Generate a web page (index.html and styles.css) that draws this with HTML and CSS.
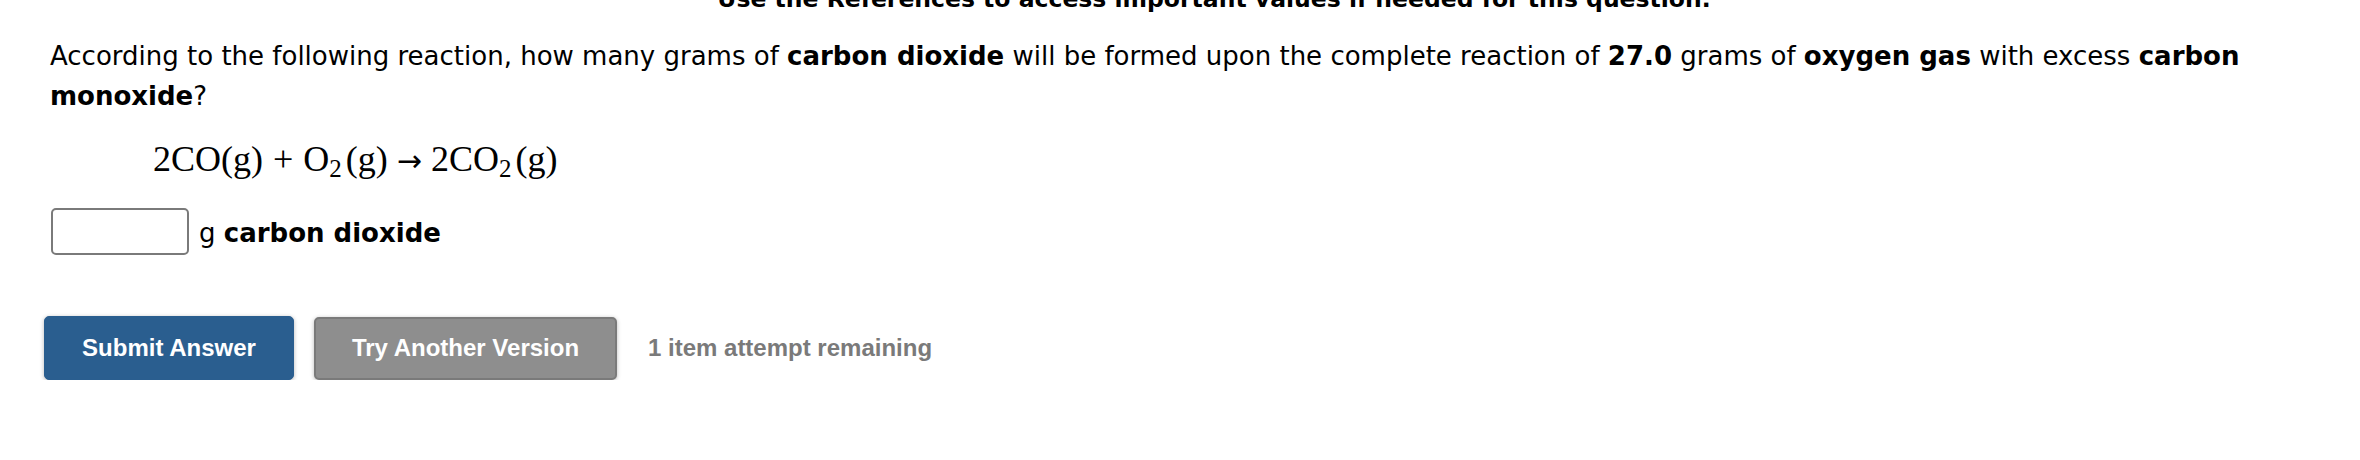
FILE: index.html
```html
<!DOCTYPE html>
<html lang="en">
<head>
<meta charset="utf-8">
<title>Question</title>
<link rel="stylesheet" href="styles.css">
</head>
<body>
<div class="page">
  <div class="refs">Use the References to access important values if needed for this question.</div>
  <p class="question">According to the following reaction, how many grams of <b>carbon dioxide</b> will be formed upon the complete reaction of <b>27.0</b> grams of <b>oxygen gas</b> with excess <b>carbon monoxide</b>?</p>
  <div class="equation"><span class="t">2CO(g)</span><span class="op">+</span><span class="t">O<sub>2</sub>(g)</span><span class="op arrow">→</span><span class="t">2CO<sub>2</sub>(g)</span></div>
  <div class="answer-row">
    <input class="answer" type="text" aria-label="answer">
    <span class="unit">g <b>carbon dioxide</b></span>
  </div>
  <div class="actions">
    <button class="btn btn-primary" type="button">Submit Answer</button>
    <button class="btn btn-secondary" type="button">Try Another Version</button>
    <span class="attempts">1 item attempt remaining</span>
  </div>
</div>
</body>
</html>
```

FILE: styles.css
```css
html, body {
  margin: 0;
  padding: 0;
  background: #ffffff;
}

.page {
  padding: 0 50px;
  font-family: "DejaVu Sans", Verdana, sans-serif;
  font-size: 26px;
  line-height: 40px;
  color: #000000;
}

.refs {
  margin-top: -21px;
  padding-left: 68px;
  text-align: center;
  font-weight: bold;
  font-size: 23.5px;
  white-space: nowrap;
}

.question {
  margin: 17px 0 0 0;
}

.question b {
  font-weight: bold;
}

.equation {
  margin-top: 18px;
  padding-left: 103px;
  font-family: "Liberation Serif", "DejaVu Serif", serif;
  font-size: 36px;
  line-height: 50px;
  display: flex;
  align-items: baseline;
}

.equation sub {
  font-size: 25px;
  line-height: 0;
  vertical-align: -6px;
  margin-right: 4px;
}

.equation .op {
  margin: 0 10px;
}

.equation .arrow {
  font-family: "DejaVu Sans", sans-serif;
  font-size: 30px;
  margin: 0 9px;
}

.answer-row {
  margin-top: 22px;
  display: flex;
  align-items: center;
  gap: 10px;
}

.answer {
  box-sizing: border-box;
  width: 138px;
  height: 47px;
  margin: 0 0 0 1px;
  border: 2px solid #7a7a7a;
  border-radius: 5px;
  background: #ffffff;
  padding: 0 8px;
  font-size: 24px;
}

.unit {
  padding-top: 2px;
}

.actions {
  margin-top: 61px;
  margin-left: -6px;
  display: flex;
  align-items: center;
  gap: 20px;
  font-family: "Liberation Sans", Arial, sans-serif;
}

.btn {
  box-sizing: border-box;
  height: 64px;
  padding: 0;
  border-radius: 5px;
  font-family: "Liberation Sans", Arial, sans-serif;
  font-weight: bold;
  font-size: 24px;
  color: #ffffff;
  text-align: center;
  white-space: nowrap;
  box-shadow: 0 1px 4px rgba(0, 0, 0, 0.28);
  cursor: pointer;
}

.btn-primary {
  width: 250px;
  background: #2a5e8f;
  border: 1px solid #2a5e8f;
}

.btn-secondary {
  width: 303px;
  height: 63px;
  background: #8e8e8e;
  border: 2px solid #7a7a7a;
}

.attempts {
  margin-left: 11px;
  font-weight: bold;
  font-size: 24px;
  color: #7a7a7a;
  white-space: nowrap;
}
```
